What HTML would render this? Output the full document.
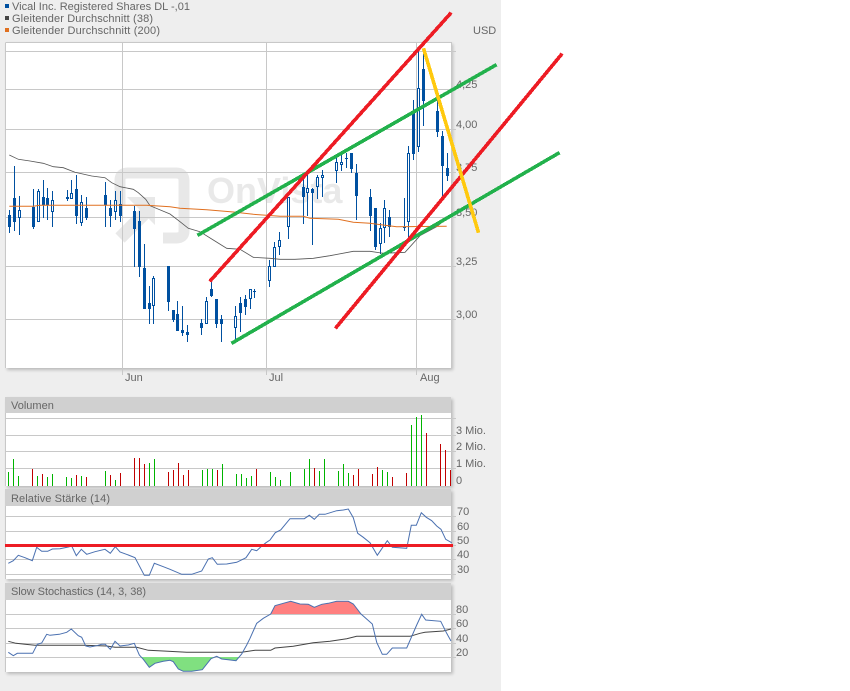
<!DOCTYPE html>
<html><head><meta charset="utf-8"><style>
html,body{margin:0;padding:0;background:#fff}
body{width:850px;height:691px;position:relative;overflow:hidden}
#bg{position:absolute;left:0;top:0;width:501px;height:691px;background:#eee}
.p{position:absolute;left:5px;width:446px;background:#fff;box-shadow:2px 2px 3px rgba(0,0,0,.22)}
svg{position:absolute;left:0;top:0}
text{font-family:"Liberation Sans",sans-serif;font-size:11px;fill:#666}
</style></head><body>
<div id="bg"></div>
<div class="p" style="top:42px;height:326px"></div>
<div class="p" style="top:397px;height:89px"></div>
<div class="p" style="top:489px;height:90px"></div>
<div class="p" style="top:583px;height:89px"></div>
<svg width="850" height="691" viewBox="0 0 850 691">
<!-- watermark -->
<g fill="none" stroke="#e8e8e8" stroke-width="11">
<path d="M120 205V180Q120 173 128 173H176Q184 173 184 181V231Q184 238 176 238H163"/>
<path d="M120 238L150 208" stroke-width="13"/>
</g>
<path d="M127 197H155V225Z" fill="#e8e8e8"/>
<text x="207" y="203" style="font-size:36px;font-weight:bold;fill:#e9e9e9">OnVista</text>

<!-- panel headers -->
<g shape-rendering="crispEdges">
<rect x="5" y="397" width="446" height="16" fill="#d0d0d0"/>
<rect x="5" y="489" width="446" height="17" fill="#d0d0d0"/>
<rect x="5" y="583" width="446" height="17" fill="#d0d0d0"/>
<!-- grid -->
<path fill="none" stroke="#c8c8c8" stroke-width="1" d="M5.5 42.5H451.5V368M5.5 368V42.5
M5 51.5H456M5 89.5H456M5 129.5H456M5 172.5H456M5 217.5H456M5 266.5H456M5 319.5H456
M122.5 42V375M266.5 42V375M416.5 42V375
M5 418.5H456M5 435.5H456M5 451.5H456M5 468.5H456M5.5 413V486
M5 516.5H456M5 531.5H456M5 545.5H456M5 559.5H456M5 574.5H456M5.5 506V579
M5 614.5H456M5 628.5H456M5 643.5H456M5 657.5H456M5.5 600V672"/>
<!-- candles: wicks -->
<path fill="none" stroke="#0050a0" stroke-width="1" d="M9.5 210V233M14.5 166V231M19.5 196V235M33.5 189V229M38.5 189V222M43.5 180V218M47.5 188V220M52.5 191V227M67.5 190V201M71.5 180V199M76.5 175V224M81.5 195V226M86.5 197V220M105.5 182V227M110.5 200V227M115.5 191V220M120.5 191V222M134.5 206V267M139.5 211V277M144.5 244V309M149.5 286V324M153.5 276V324M168.5 266V311M173.5 310V322M177.5 301V331M182.5 306V336M187.5 325V342M201.5 319V335M206.5 297V324M211.5 282V297M216.5 299V328M221.5 315V342M235.5 306V339M240.5 297V332M245.5 295V315M250.5 289V309M254.5 289V298M269.5 260V287M274.5 242V267M279.5 232V255M288.5 197V239M303.5 175V224M307.5 175V216M312.5 188V245M317.5 175V199M322.5 170V197M336.5 155V183M341.5 155V171M346.5 153V168M351.5 153V173M356.5 164V220M370.5 189V231M375.5 208V250M380.5 223V254M384.5 200V243M389.5 210V237M404.5 198V231M408.5 146V240M413.5 100V160M418.5 50V152M423.5 52V126M437.5 100V137M442.5 131V200M447.5 153V181"/>
<!-- candles: bodies -->
<path fill="none" stroke="#0050a0" stroke-width="3" d="M9.5 215V227M14.5 198V222M19.5 210V218M33.5 207V227M38.5 191V222M43.5 197V205M47.5 198V205M52.5 200V212M67.5 197V199M71.5 193V199M76.5 189V216M81.5 202V223M86.5 208V218M105.5 195V205M110.5 208V216M115.5 200V212M120.5 204V216M134.5 211V229M139.5 221V267M144.5 268V309M149.5 303V309M153.5 278V306M168.5 266V302M173.5 310V320M177.5 314V331M182.5 330V333M187.5 332V335M201.5 323V328M206.5 301V324M211.5 289V296M216.5 299V324M221.5 319V324M235.5 316V328M240.5 303V313M245.5 299V307M250.5 289V299M269.5 266V281M274.5 247V267M279.5 240V247M288.5 197V227M303.5 187V197M307.5 188V193M312.5 189V193M317.5 177V187M322.5 175V178M336.5 162V171M341.5 162V165M351.5 153V169M356.5 173V196M370.5 197V216M375.5 208V247M380.5 228V244M384.5 208V228M389.5 217V227M408.5 153V222M413.5 113V154M418.5 88V147M423.5 69V101M437.5 111V132M442.5 136V166M447.5 168V176"/>
<path fill="none" stroke="#0050a0" stroke-width="1" d="M345 158.5H348M253 291.5H256M403 227.5H406"/>
<!-- hollow interiors -->
<path fill="none" stroke="#fff" stroke-width="1" d="M19.5 211V217M38.5 192V221M52.5 201V211M71.5 194V198M81.5 203V222M115.5 201V211M153.5 279V305M206.5 302V323M235.5 317V327M250.5 290V298M269.5 267V280M274.5 248V266M279.5 241V246M288.5 198V226M307.5 189V192M317.5 178V186M322.5 176V177M336.5 163V170M341.5 163V164M380.5 229V243M384.5 209V227M408.5 154V221M418.5 89V146"/>
<!-- volume -->
<path fill="none" stroke="#00b400" stroke-width="1" d="M8.5 472V486M13.5 459V486M18.5 476V486M37.5 476V486M47.5 477V486M52.5 474V486M66.5 477V486M71.5 478V486M81.5 476V486M105.5 471V486M115.5 480V486M149.5 463V486M154.5 459V486M202.5 470V486M207.5 469V486M212.5 469V486M222.5 464V486M236.5 474V486M241.5 474V486M246.5 478V486M251.5 476V486M270.5 472V486M275.5 477V486M280.5 480V486M290.5 472V486M304.5 469V486M309.5 459V486M319.5 471V486M324.5 459V486M338.5 471V486M343.5 464V486M348.5 473V486M382.5 470V486M387.5 472V486M411.5 425V486M416.5 417V486M421.5 415V486"/>
<path fill="none" stroke="#c00000" stroke-width="1" d="M32.5 469V486M42.5 474V486M76.5 475V486M86.5 477V486M110.5 475V486M120.5 473V486M134.5 458V486M139.5 458V486M144.5 464V486M168.5 472V486M173.5 470V486M178.5 463V486M183.5 475V486M188.5 470V486M217.5 470V486M256.5 469V486M314.5 468V486M353.5 475V486M358.5 469V486M372.5 474V486M377.5 467V486M392.5 477V486M406.5 473V486M426.5 433V486M440.5 444V486M445.5 450V486M450.5 470V486"/>
</g>

<!-- moving averages -->
<polyline fill="none" stroke="#555" stroke-width=".8" points="9.3,155 18.3,159.3 30,161 43.3,163.3 53.3,166.7 63.3,167.7 75,172.3 91.7,176 105,177.7 111.7,182.7 120,186.7 133.3,189.3 138.3,192.7 145.7,199.3 150,205.7 170,214 180,221.7 188.3,228.3 200,231.7 213.3,240 226.7,248.3 240,249.3 253.3,257.3 270,258.3 280,259.3 295,259.3 313.3,258.3 330,255.7 353.3,251.3 370,251.3 383.3,253.3 405,252.3 420,235.7 436.7,226.7 445,220"/>
<polyline fill="none" stroke="#e07020" stroke-width="1" points="9.3,206.3 33.3,206.3 40,205.3 146.7,205.3 170,206.7 180,208.3 206.7,209.7 233.3,212 253.3,214.3 280,216.3 303.3,216.3 310,218.3 338.3,219.3 353.3,222.3 370,223.3 396.7,226.7 446.7,226.3"/>

<!-- stochastic fills -->
<polygon fill="#80e080" points="141,657 143.3,659.3 149.3,667.3 155,663.3 163.3,661.3 170,660.3 173.3,661.7 178.3,669 183.3,671.3 191.7,671.3 202.3,669.7 211,658.7 213,657 219,657 221.7,659 228.3,659.7 236,660.7 239,657"/>
<polygon fill="#ff8080" points="270.7,614 275,605.7 283.3,603.3 290.7,601.3 300,604 308.3,604.3 314.3,607.3 321.7,604.3 328.3,603.3 336.7,601.3 348.3,601.3 353.3,604 361,614"/>

<!-- RSI line -->
<polyline fill="none" stroke="#4a70b0" stroke-width="1" points="8.3,563.3 13.3,560.7 18.3,555.3 25,557.7 32.3,560.7 36.7,547.3 41.7,551.3 47.7,551.3 52.3,549 60,548.7 68.3,547 71.7,546 76.3,555.7 81.3,549.3 86.7,554.3 95,551.7 105,549.3 110.3,553.3 115.3,546.7 120,552 128.3,555 135,557.7 144.3,575.3 149.3,575.3 154.3,563.3 163.3,566.7 170,569.3 181.7,574.3 191.7,574.3 201.7,571 208.3,559 212.3,557.7 217.3,564.3 226.7,564 236.7,562.3 246,557.7 251.7,549.3 256.7,550.7 260.7,547 266,542.7 270,540 275.3,532.7 280.7,530 290,518.7 304.3,518.7 309.3,515.3 314.3,519.3 319.3,514.3 325,514.3 336.7,510.7 343.3,510 348.3,509 353.3,517.7 357.7,533.3 363.3,537.3 370,542.7 377.3,555.3 387.3,540.7 392.3,547.3 406.7,548.3 411.3,525.3 416.3,525.3 421.3,512.7 426.3,517.3 431.7,520.7 436.7,526 441,529.3 445.7,539.3 451.7,542.7"/>
<rect x="5" y="544" width="448" height="3" fill="#ed1c24" shape-rendering="crispEdges"/>

<!-- stochastic lines -->
<polyline fill="none" stroke="#444" stroke-width="1" points="8.3,641.3 16,643.3 25,644.3 35,645.3 83.3,645.3 106.7,646 115,647.3 136.7,647.3 148.3,650.3 163.3,651 186.7,652.3 241.7,652.3 255,650.3 270.7,650.3 275,648 293.3,646.3 313.3,642.7 330,641.3 346.7,638.7 356.7,636.3 410,636.3 420,633.3 425,632.3 443.3,631 451,629"/>
<polyline fill="none" stroke="#4a70b0" stroke-width="1" points="8.3,652.3 13.3,655.7 17.3,653.3 32.7,653.3 37.3,644.3 41.7,643 46.7,634.3 50,635.3 59.3,634.3 66.7,632.3 71.3,629 78.3,635.7 81.7,637.3 85.7,646 90,647 96.7,645.7 101.7,644.3 105.3,644.3 110.3,649.3 115,641.3 120,646 128.3,645 134.3,643.3 139.3,655 143.3,659.3 149.3,667.3 155,663.3 163.3,661.3 170,660.3 173.3,661.7 178.3,669 183.3,671.3 191.7,671.3 202.3,669.7 211,658.7 216.7,656.3 221.7,659 228.3,659.7 236,660.7 241.7,654 246.7,645 250,638.3 256.7,623.3 263.3,618.3 270.7,614 275,605.7 283.3,603.3 290.7,601.3 300,604 308.3,604.3 314.3,607.3 321.7,604.3 328.3,603.3 336.7,601.3 348.3,601.3 353.3,604 361,614 372.3,624 376.7,642.3 382.3,654.3 386.7,654.3 392.3,648 406.7,648 416.7,625 421.7,614.3 425.7,620 440.7,621.3 446.7,633.3 451,641"/>

<!-- legend squares -->
<g shape-rendering="crispEdges">
<rect x="5" y="4" width="4" height="4" fill="#0050a0"/>
<rect x="5" y="16" width="4" height="4" fill="#444"/>
<rect x="5" y="28" width="4" height="4" fill="#e07020"/>
</g>

<!-- text -->
<text x="12" y="10" textLength="178">Vical Inc. Registered Shares DL -,01</text>
<text x="12" y="22" textLength="141">Gleitender Durchschnitt (38)</text>
<text x="12" y="34" textLength="148">Gleitender Durchschnitt (200)</text>
<text x="473" y="34">USD</text>
<text x="456" y="88">4,25</text>
<text x="456" y="128">4,00</text>
<text x="456" y="171">3,75</text>
<text x="456" y="216">3,50</text>
<text x="456" y="265">3,25</text>
<text x="456" y="318">3,00</text>
<text x="125" y="381">Jun</text>
<text x="269" y="381">Jul</text>
<text x="420" y="381">Aug</text>
<text x="11" y="409">Volumen</text>
<text x="456" y="434">3 Mio.</text>
<text x="456" y="450">2 Mio.</text>
<text x="456" y="467">1 Mio.</text>
<text x="456" y="484">0</text>
<text x="11" y="502" textLength="99">Relative Stärke (14)</text>
<text x="457" y="515">70</text>
<text x="457" y="530">60</text>
<text x="457" y="544">50</text>
<text x="457" y="558">40</text>
<text x="457" y="573">30</text>
<text x="11" y="595" textLength="135">Slow Stochastics (14, 3, 38)</text>
<text x="456" y="613">80</text>
<text x="456" y="627">60</text>
<text x="456" y="642">40</text>
<text x="456" y="656">20</text>

<!-- hand-drawn trend lines -->
<g stroke-width="3.6" fill="none" shape-rendering="crispEdges" stroke-linecap="square">
<path stroke="#22b14c" d="M199 234.500L495 65.500"/>
<path stroke="#22b14c" d="M233 342.500L558 153.500"/>
<path stroke="#ed1c24" d="M211 280L450 14"/>
<path stroke="#ed1c24" d="M336.500 327L561 55"/>
<path stroke="#ffc90e" d="M424 50L478 231"/>
</g>
</svg>
</body></html>
